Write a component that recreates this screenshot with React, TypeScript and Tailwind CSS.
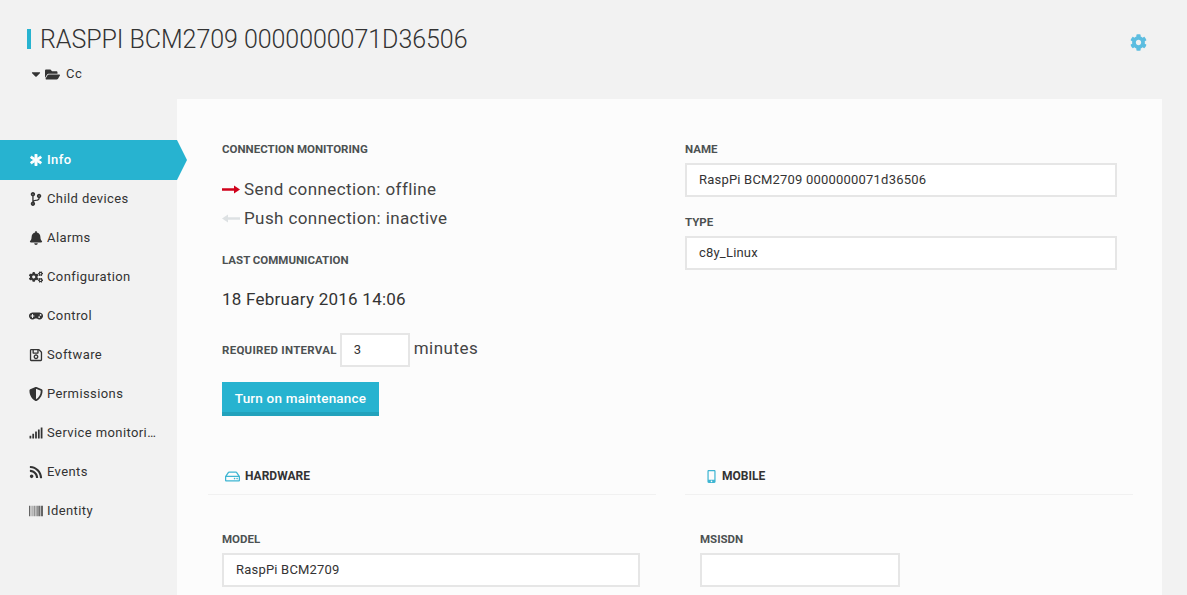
import React from 'react';
import { FaAsterisk, FaCodeBranch, FaBell, FaCogs, FaGamepad, FaRegSave, FaShieldAlt, FaSignal, FaRss, FaBarcode, FaCaretDown, FaFolderOpen, FaCog, FaRegHdd, FaMobileAlt } from 'react-icons/fa';

const navItems = [
    { label: 'Info', icon: FaAsterisk, active: true },
    { label: 'Child devices', icon: FaCodeBranch },
    { label: 'Alarms', icon: FaBell },
    { label: 'Configuration', icon: FaCogs },
    { label: 'Control', icon: FaGamepad },
    { label: 'Software', icon: FaRegSave },
    { label: 'Permissions', icon: FaShieldAlt },
    { label: 'Service monitoring', icon: FaSignal },
    { label: 'Events', icon: FaRss },
    { label: 'Identity', icon: FaBarcode },
];

const Label: React.FC<{ children: React.ReactNode; className?: string }> = ({ children, className = '' }) => (
    <div className={`text-[11.5px] leading-[14px] font-bold text-[#4c5152] uppercase ${className}`}>{children}</div>
);

const Field: React.FC<{ value: string; className?: string }> = ({ value, className = '' }) => (
    <div className={`h-[34px] border-2 border-[#e6e6e6] bg-white pl-[12px] text-[13px] leading-[30px] tracking-[0.2px] text-[#333] ${className}`}>{value}</div>
);

const Arrow: React.FC<{ color: string; left?: boolean }> = ({ color, left }) => (
    <svg width="18" height="9" viewBox="0 0 18 9" className="mr-[4px]">
        {left ? (
            <path d="M18 3.2H6V0.5L0 4.5l6 4V5.8h12z" fill={color} />
        ) : (
            <path d="M0 3.2h12V0.5l6 4-6 4V5.8H0z" fill={color} />
        )}
    </svg>
);

const App: React.FC = () => {
    return (
        <div className="h-[595px] w-[1187px] overflow-hidden bg-[#f2f2f2] font-['Roboto',sans-serif] text-[#333]">
            <header className="flex h-[99px] justify-between pl-[27px] pr-[40px]">
                <div>
                    <div className="mt-[29px] flex h-[20px] items-center border-l-[4px] border-[#27b3d0] pl-[9px]">
                        <h1 className="whitespace-nowrap pt-[2px] text-[25px] font-light leading-[20px] tracking-[-0.05px] text-[#333]">RASPPI BCM2709 0000000071D36506</h1>
                    </div>
                    <div className="mt-[17px] flex items-center pl-[3px] text-[13px] leading-[16px] tracking-[0.6px]">
                        <FaCaretDown className="w-[12px] text-[14px]" />
                        <FaFolderOpen className="ml-[3px] text-[15px]" />
                        <span className="ml-[6px]">Cc</span>
                    </div>
                </div>
                <FaCog className="mt-[34px] text-[17px] text-[#5cbde0]" />
            </header>
            <div className="flex">
                <nav className="w-[177px] shrink-0 pt-[41px]">
                    {navItems.map((item) => {
                        const Icon = item.icon;
                        return (
                            <div
                                key={item.label}
                                className={`relative flex items-center text-[13px] tracking-[0.4px] ${item.active ? 'h-[40px] bg-[#27b3d0] font-medium text-white' : 'h-[39px] pb-[2px] text-[#333]'}`}
                            >
                                <span className="flex w-[47px] shrink-0 justify-center pl-[25px] pr-[1px]">
                                    <Icon className={item.active ? 'shrink-0 stroke-[40] text-[12px]' : 'shrink-0 text-[14px]'} />
                                </span>
                                <span className="w-[113px] truncate">{item.label}</span>
                                {item.active && (
                                    <span className="absolute left-[177px] top-0 z-10 h-0 w-0 border-y-[20px] border-l-[10px] border-y-transparent border-l-[#27b3d0]" />
                                )}
                            </div>
                        );
                    })}
                </nav>
                <main className="h-[496px] w-[985px] bg-[#fcfcfc]">
                    <div className="flex h-[343px]">
                        <section className="w-[508px] pl-[45px] pt-[43px]">
                            <Label>Connection monitoring</Label>
                            <div className="mt-[19px] flex h-[29px] items-center text-[17px] tracking-[0.4px] text-[#444]">
                                <Arrow color="#d0021b" />Send connection: offline
                            </div>
                            <div className="flex h-[29px] items-center text-[17px] tracking-[0.4px] text-[#444]">
                                <Arrow color="#dde1e3" left />Push connection: inactive
                            </div>
                            <Label className="mt-[20px]">Last communication</Label>
                            <div className="mt-[21px] text-[17px] leading-[22px] tracking-[0.25px]">18 February 2016 14:06</div>
                            <div className="mt-[23px] flex items-center">
                                <div className="text-[11.5px] font-bold leading-[14px] tracking-[0.27px] text-[#4c5152]">REQUIRED INTERVAL</div>
                                <Field value="3" className="ml-[3px] w-[70px]" />
                                <span className="ml-[4px] pb-[2px] text-[17px] tracking-[0.5px] text-[#444]">minutes</span>
                            </div>
                            <button className="mt-[15px] h-[34px] w-[157px] border-b-[4px] border-[#22a2bc] bg-[#27b3d0] pt-[3px] text-[13.5px] font-medium tracking-[0.2px] text-white">Turn on maintenance</button>
                        </section>
                        <section className="w-[432px] pt-[43px]">
                            <Label>Name</Label>
                            <Field value="RaspPi BCM2709 0000000071d36506" className="mt-[7px]" />
                            <Label className="mt-[18px]">Type</Label>
                            <Field value="c8y_Linux" className="mt-[7px]" />
                        </section>
                    </div>
                    <div className="flex">
                        <section className="ml-[31px] w-[448px]">
                            <div className="flex h-[53px] items-center border-b border-[#f1f1f1] pb-[2px] pl-[17px] pt-[18px]">
                                <FaRegHdd className="text-[15px] text-[#3eb5d2]" />
                                <span className="ml-[5px] text-[12px] font-bold text-[#333]">HARDWARE</span>
                            </div>
                            <div className="pl-[14px] pt-[37px]">
                                <Label>Model</Label>
                                <Field value="RaspPi BCM2709" className="mt-[7px] w-[418px]" />
                            </div>
                        </section>
                        <section className="ml-[29px] w-[448px]">
                            <div className="flex h-[53px] items-center border-b border-[#f1f1f1] pb-[2px] pl-[20px] pt-[18px]">
                                <FaMobileAlt className="text-[13px] text-[#3eb5d2]" />
                                <span className="ml-[4px] text-[12px] font-bold text-[#333]">MOBILE</span>
                            </div>
                            <div className="pl-[15px] pt-[37px]">
                                <Label>MSISDN</Label>
                                <Field value="" className="mt-[7px] w-[200px]" />
                            </div>
                        </section>
                    </div>
                </main>
            </div>
        </div>
    );
};

export default App;
